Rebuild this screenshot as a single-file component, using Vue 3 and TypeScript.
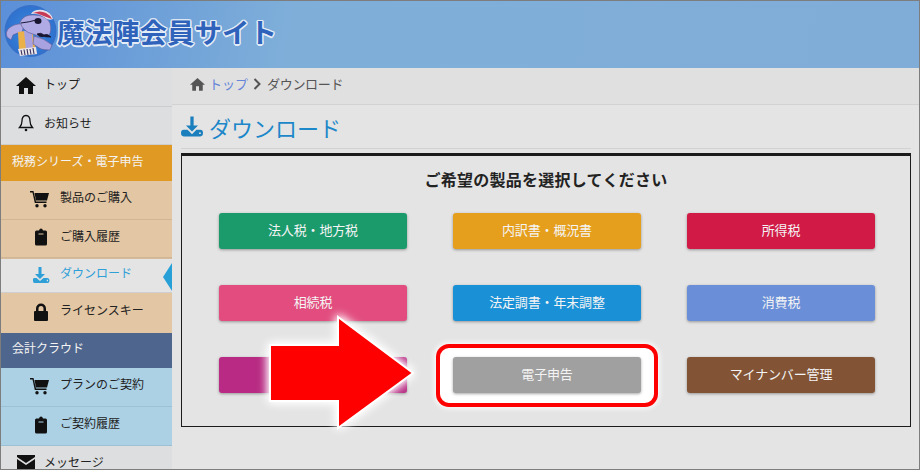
<script setup lang="ts">
// 製品ボタン
const products = [
	{ label: "法人税・地方税", color: "#1b9a6c" },
	{ label: "内訳書・概況書", color: "#e69f1c" },
	{ label: "所得税", color: "#d11a45" },
	{ label: "相続税", color: "#e24c7e" },
	{ label: "法定調書・年末調整", color: "#1a91d6" },
	{ label: "消費税", color: "#6a8fd8" },
	{ label: "", color: "#b82a83" },
	{ label: "電子申告", color: "#a0a0a0", marked: true },
	{ label: "マイナンバー管理", color: "#825335" },
]
</script>

<template>
	<div class="page">
		<header class="header">
			<svg class="mascot" viewBox="1 3 57 60" aria-hidden="true">
				<defs>
					<radialGradient id="ball" cx="0.5" cy="0.5" r="0.55">
						<stop offset="0" stop-color="#3f8be0" />
						<stop offset="0.8" stop-color="#2f74d0" />
						<stop offset="1" stop-color="#3d6cc0" />
					</radialGradient>
				</defs>
				<circle cx="30.500" cy="31" r="26" fill="url(#ball)" />
				<!-- 左腕 -->
				<path d="M24 24 Q14 23 8 29 Q5 33 7 37 L11 40 L13 35 Q18 32 22 33 Z" fill="#b0abe4" stroke="#5d5890" stroke-width="0.6" />
				<!-- 胴体とベスト -->
				<path d="M18 32 L32 30 L36 50 L19 51 Z" fill="#eab04a" />
				<path d="M24 31 L32 31 L33 49 L26 50 Z" fill="#a8a3e0" />
				<!-- スカート -->
				<path d="M18 49 L36 47 L37 54 L20 56 Z" fill="#e9e4ea" />
				<path d="M21 50 L22 55 M24 49.500 L25 55 M27 49 L28 55 M30 49 L31 54.500 M33 48 L34 54" stroke="#37325c" stroke-width="1.100" />
				<!-- 右腕 -->
				<path d="M34 36 Q44 38 52 45 L50 50 Q44 50 41 49 L33 44 Z" fill="#a8a3e0" stroke="#5d5890" stroke-width="0.6" />
				<!-- 頭 -->
				<path d="M20 22 Q24 14 34 15 Q46 15 50 23 Q52 31 49 35 Q42 38 33 34 Q23 32 20 22 Z" fill="#b0abe4" stroke="#5d5890" stroke-width="0.6" />
				<!-- 帽子 -->
				<path d="M31 14 Q34 9 43 10 Q51 12 53 19 Q48 21 44 17 Q38 13 31 14 Z" fill="#e8e2ea" />
				<path d="M33 13 Q40 10 46 13 Q50 15 52 19 Q46 17 41 15 Q37 13 33 13 Z" fill="#c73a55" />
				<!-- 眼帯とひげ -->
				<ellipse cx="38" cy="21" rx="3.500" ry="3" fill="#191631" />
				<path d="M21 23 Q30 22 36 20" stroke="#191631" stroke-width="1" fill="none" />
				<path d="M37 34 Q41 32 44 35 Q47 33 51 37 Q46 37 44 36.500 Q40 38 37 34 Z" fill="#191631" stroke="#191631" stroke-width="0.8" />
			</svg>
			<h1 class="site-title">魔法陣会員サイト</h1>
		</header>

		<div class="body">
			<nav class="sidebar">
				<a class="nav-item">
					<svg class="nav-icon" viewBox="0 0 20 18"><path d="M10 1 L20 10 L17 10 L17 18 L12 18 L12 12 L8 12 L8 18 L3 18 L3 10 L0 10 Z" /></svg>
					<span>トップ</span>
				</a>
				<a class="nav-item">
					<svg class="nav-icon" viewBox="0 0 20 18"><path d="M10 1.500 C7 1.500 6 4 6 7 C6 10 5 12 3.500 13.500 L16.500 13.500 C15 12 14 10 14 7 C14 4 13 1.500 10 1.500 Z" fill="none" stroke="#111" stroke-width="1.300" /><circle cx="10" cy="16" r="1.300" /></svg>
					<span>お知らせ</span>
				</a>

				<div class="nav-group orange"><span>税務シリーズ・電子申告</span></div>
				<a class="nav-sub tan">
					<svg class="sub-icon" viewBox="0 0 20 18"><path d="M0 1 L3.500 1 L6 11.500 L16.500 11.500 L16.500 13 L4.800 13 L2.500 2.500 L0 2.500 Z M4.500 3 L19 3 L17 10.500 L6 10.500 Z" /><circle cx="7" cy="15.800" r="1.700" /><circle cx="15" cy="15.800" r="1.700" /></svg>
					<span>製品のご購入</span>
				</a>
				<a class="nav-sub tan">
					<svg class="sub-icon" viewBox="0 0 20 18"><path fill-rule="evenodd" d="M9 2.500 Q9.500 0.500 11 0.500 Q12.500 0.500 13 2.500 L15.500 2.500 Q17 2.500 17 4 L17 16 Q17 17.500 15.500 17.500 L6.500 17.500 Q5 17.500 5 16 L5 4 Q5 2.500 6.500 2.500 Z M8.500 5.500 L8.500 6.500 L13.500 6.500 L13.500 5.500 Z" /></svg>
					<span>ご購入履歴</span>
				</a>
				<a class="nav-sub active">
					<svg class="sub-icon" viewBox="0 0 20 18"><path fill-rule="evenodd" d="M8.500 1 L11.500 1 L11.500 8 L15 8 L10 13 L5 8 L8.500 8 Z M3 13 Q3 12 4.500 12 L6.500 12 L10 15 L13.500 12 L17.500 12 Q19.500 12 19.500 14.500 Q19.500 17 17.500 17 L4.500 17 Q3 17 3 15 Z M16.800 13.800 L16.800 15.200 L18 15.200 L18 13.800 Z" /></svg>
					<span>ダウンロード</span>
				</a>
				<a class="nav-sub tan license">
					<svg class="sub-icon" viewBox="0 0 20 18"><path fill-rule="evenodd" d="M6 8 L6 5.500 A5 5 0 0 1 16 5.500 L16 8 L17 8 Q18 8 18 9 L18 17 Q18 18 17 18 L5 18 Q4 18 4 17 L4 9 Q4 8 5 8 Z M8.500 8 L13.500 8 L13.500 5.500 A2.500 2.500 0 0 0 8.500 5.500 Z" /></svg>
					<span>ライセンスキー</span>
				</a>

				<div class="nav-group navy"><span>会計クラウド</span></div>
				<a class="nav-sub sky">
					<svg class="sub-icon" viewBox="0 0 20 18"><path d="M0 1 L3.500 1 L6 11.500 L16.500 11.500 L16.500 13 L4.800 13 L2.500 2.500 L0 2.500 Z M4.500 3 L19 3 L17 10.500 L6 10.500 Z" /><circle cx="7" cy="15.800" r="1.700" /><circle cx="15" cy="15.800" r="1.700" /></svg>
					<span>プランのご契約</span>
				</a>
				<a class="nav-sub sky">
					<svg class="sub-icon" viewBox="0 0 20 18"><path fill-rule="evenodd" d="M9 2.500 Q9.500 0.500 11 0.500 Q12.500 0.500 13 2.500 L15.500 2.500 Q17 2.500 17 4 L17 16 Q17 17.500 15.500 17.500 L6.500 17.500 Q5 17.500 5 16 L5 4 Q5 2.500 6.500 2.500 Z M8.500 5.500 L8.500 6.500 L13.500 6.500 L13.500 5.500 Z" /></svg>
					<span>ご契約履歴</span>
				</a>
				<a class="nav-item">
					<svg class="nav-icon" viewBox="0 0 20 18"><path d="M1 2 L19 2 L19 4 L10 10 L1 4 Z M1 6 L10 12 L19 6 L19 16 L1 16 Z" /></svg>
					<span>メッセージ</span>
				</a>
			</nav>

			<main class="main">
				<div class="breadcrumb">
					<svg class="crumb-home" viewBox="0 0 20 18"><path d="M10 1 L20 10 L17 10 L17 18 L12 18 L12 12 L8 12 L8 18 L3 18 L3 10 L0 10 Z" /></svg>
					<a class="crumb-link">トップ</a>
					<svg class="crumb-sep" viewBox="0 0 8 12"><path d="M1.500 1 L6.500 6 L1.500 11" fill="none" stroke="#555" stroke-width="2" /></svg>
					<span class="crumb-current">ダウンロード</span>
				</div>

				<div class="content">
					<h2 class="page-title">
						<svg class="title-icon" viewBox="0 0 20 18"><path fill-rule="evenodd" d="M8.500 0 L11.500 0 L11.500 8 L15.500 8 L10 13.500 L4.500 8 L8.500 8 Z M0 15 Q0 12 2.500 12 L6 12 L10 16 L14 12 L17.500 12 Q20 12 20 15 Q20 18 17.500 18 L2.500 18 Q0 18 0 15 Z M16.500 14.500 L16.500 15.800 L18 15.800 L18 14.500 Z" /></svg>
						<span>ダウンロード</span>
					</h2>

					<section class="panel">
						<h3 class="panel-title">ご希望の製品を選択してください</h3>
						<div class="grid">
							<div v-for="p in products" :key="p.color" class="cell" :class="{ marked: p.marked }">
								<a class="product" :style="{ background: p.color }">{{ p.label }}</a>
							</div>
						</div>
						<svg class="arrow" viewBox="0 0 170 136" aria-hidden="true">
							<polygon points="12,38 80,38 80,10 155,66 80,121 80,94 12,94" fill="#fe0000" stroke="#fff" stroke-width="2" />
						</svg>
					</section>
				</div>
			</main>
		</div>
	</div>
</template>

<style>
html,
body {
	margin: 0;
	background: #e4e4e4;
}
</style>

<style scoped>
.page {
	width: 920px;
	height: 470px;
	box-sizing: border-box;
	border: 1px solid #7d7d7d;
	overflow: hidden;
	display: flex;
	flex-direction: column;
	background: #e4e4e4;
	font-family: "Noto Sans CJK JP", "Liberation Sans", sans-serif;
	font-size: 13px;
	color: #222;
}

.header {
	flex: none;
	height: 67px;
	display: flex;
	align-items: flex-start;
	background: linear-gradient(100deg, #5b8fd8 0%, #7fafd9 32%, #80add8 100%);
}

.mascot {
	flex: none;
	width: 57px;
	height: 60px;
	margin-top: 2px;
	filter: blur(0.4px);
}

.site-title {
	margin: 17px 0 0 -1px;
	font-size: 27.5px;
	font-weight: 700;
	line-height: 1;
	color: #2e62bb;
	text-shadow:
		1.5px 0 0 #e4ecf6,
		-1.5px 0 0 #e4ecf6,
		0 1.5px 0 #e4ecf6,
		0 -1.5px 0 #e4ecf6,
		1px 1px 0 #e4ecf6,
		-1px -1px 0 #e4ecf6,
		1px -1px 0 #e4ecf6,
		-1px 1px 0 #e4ecf6;
}

.body {
	flex: 1;
	min-height: 0;
	display: flex;
}

.sidebar {
	flex: none;
	width: 171px;
	display: flex;
	flex-direction: column;
	background: #dddee0;
	font-size: 12px;
}

.sidebar span {
	padding-bottom: 6px;
}

.nav-item {
	flex: none;
	height: 38.5px;
	box-sizing: border-box;
	display: flex;
	align-items: center;
	padding-left: 15px;
	border-bottom: 1px solid #cdcdcd;
}

.nav-icon {
	width: 20px;
	height: 18px;
	margin: 0 8px 4px 0;
	fill: #111;
}

.nav-group {
	flex: none;
	height: 36px;
	box-sizing: border-box;
	display: flex;
	align-items: center;
	padding-left: 11px;
	color: #f4f4f4;
}

.orange {
	background: #e09a24;
}

.navy {
	height: 35.5px;
	background: #4e658d;
}

.nav-sub {
	flex: none;
	height: 38.5px;
	box-sizing: border-box;
	display: flex;
	align-items: center;
	padding-left: 29px;
	border-bottom: 1px solid rgba(0, 0, 0, 0.08);
	position: relative;
}

.sub-icon {
	width: 20px;
	height: 18px;
	margin: 0 10px 2px 0;
	fill: #111;
}

.tan {
	background: #e3c6a3;
}

.license {
	height: 39.5px;
	border-bottom: none;
}

.sky {
	height: 38.75px;
	background: #acd1e5;
}

.active {
	height: 35px;
	background: #e4e4e4;
	color: #2f9fd8;
	border-top: 1px solid #d5bc9c;
	border-bottom: 1px solid #cfcfcf;
}

.active .sub-icon {
	fill: #2f9fd8;
}

.active::after {
	content: "";
	position: absolute;
	right: 0;
	top: 4px;
	border-style: solid;
	border-width: 14px 9px 14px 0;
	border-color: transparent #27a0d8 transparent transparent;
}

.main {
	flex: 1;
	min-width: 0;
	display: flex;
	flex-direction: column;
}

.breadcrumb {
	flex: none;
	height: 37px;
	box-sizing: border-box;
	display: flex;
	align-items: center;
	padding: 0 0 5px 18px;
	background: #e0e0e0;
	border-bottom: 1px solid #d2d2d2;
	color: #555;
}

.crumb-home {
	width: 15px;
	height: 14px;
	margin-right: 4px;
	fill: #555;
}

.crumb-link {
	color: #6585d8;
}

.crumb-sep {
	width: 8px;
	height: 12px;
	margin: 0 6px 0 5px;
}

.crumb-current {
	letter-spacing: -0.3px;
}

.content {
	padding: 0 8px 0 9px;
}

.page-title {
	height: 44px;
	box-sizing: border-box;
	margin: 0;
	display: flex;
	align-items: center;
	border-bottom: 1px solid #d2d2d2;
	font-size: 22px;
	font-weight: 400;
	color: #1c87c9;
}

.title-icon {
	width: 22px;
	height: 21px;
	margin-right: 6px;
	fill: #1c7fbd;
}

.panel {
	position: relative;
	margin-top: 4px;
	height: 274px;
	box-sizing: border-box;
	border: 1px solid #1c1c1c;
	border-top-width: 3px;
}

.panel-title {
	margin: 0;
	padding-top: 12px;
	height: 44px;
	box-sizing: border-box;
	text-align: center;
	font-size: 16px;
	font-weight: 700;
	line-height: 22px;
	letter-spacing: 0.25px;
	color: #222;
}

.grid {
	display: grid;
	grid-template-columns: repeat(3, 188px);
	grid-auto-rows: 36px;
	column-gap: 46px;
	row-gap: 36px;
	margin: 13px 0 0 37px;
}

.cell {
	position: relative;
}

.product {
	position: relative;
	z-index: 1;
	box-sizing: border-box;
	display: flex;
	align-items: center;
	justify-content: center;
	height: 100%;
	padding-bottom: 4px;
	border-radius: 3px;
	color: #f4f4f4;
	letter-spacing: -0.15px;
	box-shadow: 0 1px 3px rgba(0, 0, 0, 0.35);
}

/* 赤枠の強調 */
.marked::before {
	content: "";
	position: absolute;
	inset: -13px -17px -14px -17px;
	border: 4px solid #fe0000;
	border-radius: 13px;
	background: #fff;
	box-shadow: 0 0 5px 2px rgba(255, 255, 255, 0.8);
}

.arrow {
	position: absolute;
	left: 76px;
	top: 151px;
	width: 170px;
	height: 136px;
	z-index: 2;
	overflow: visible;
	filter: drop-shadow(0 0 4px #fff) drop-shadow(0 0 4px rgba(255, 255, 255, 0.8));
}
</style>
